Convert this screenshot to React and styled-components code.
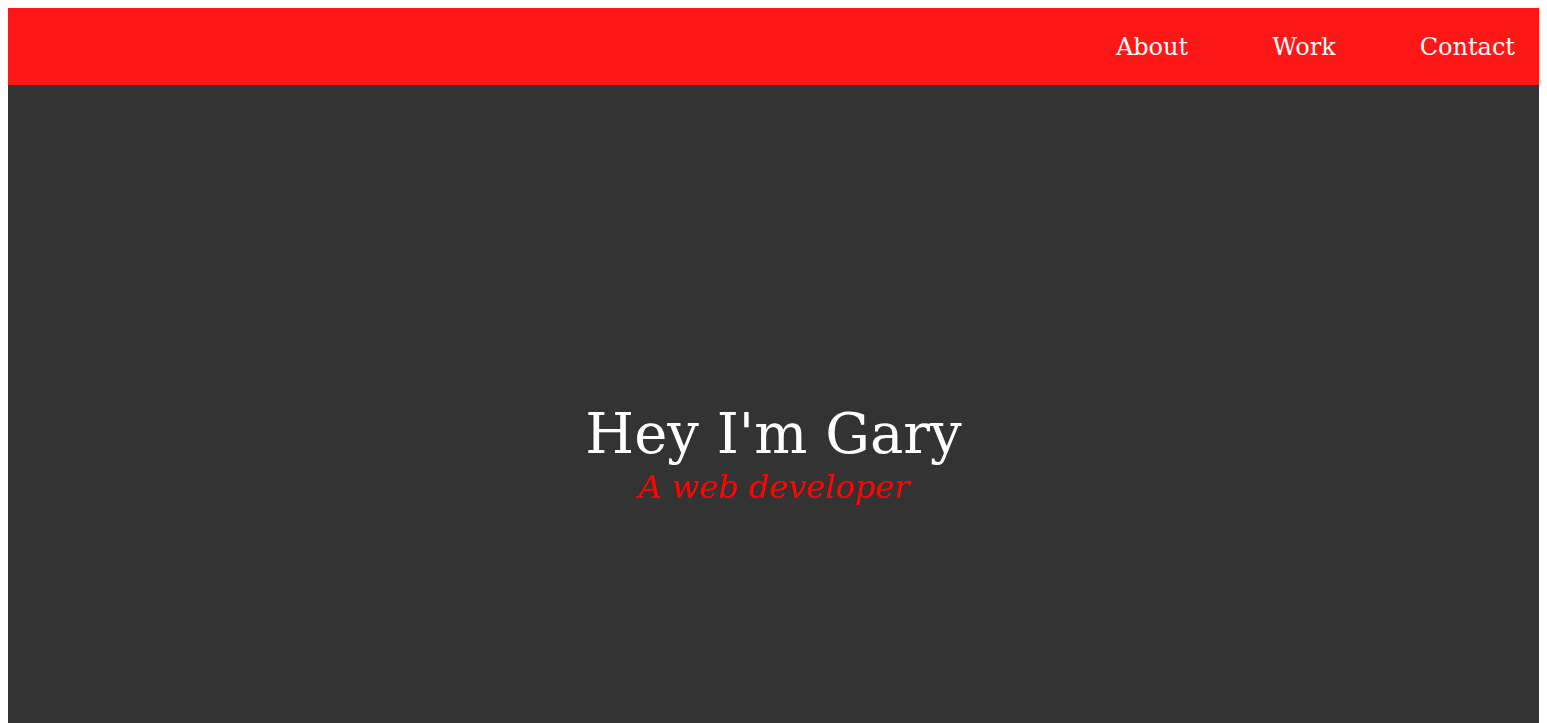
import React from 'react';
import styled, {createGlobalStyle} from "styled-components";

const GlobalStyle = createGlobalStyle`
  body {
    margin: 8px;
    font-family: "DejaVu Serif", serif;
  }
`

const Header = styled.header`
  height: 77px;
  background: #ff1717;
  display: flex;
  align-items: center;
  justify-content: flex-end;
  padding: 0 24px;
`

const Nav = styled.nav`
  display: flex;
  gap: 84px;
`

const NavLink = styled.a`
  color: #ffffff;
  font-size: 24px;
  text-decoration: none;
`

const Hero = styled.section`
  height: 100vh;
  padding-top: 8px;
  background: #333333;
  display: flex;
  flex-direction: column;
  align-items: center;
  justify-content: center;
  text-align: center;
`

const HeroTitle = styled.h1`
  margin: 0;
  color: #ffffff;
  font-size: 56px;
  font-weight: 400;
  line-height: 1.1;
`

const HeroSubtitle = styled.p`
  margin: 3px 0 0;
  color: #ff0000;
  font-size: 32px;
  font-style: italic;
`

function App() {
  return (
    <>
      <GlobalStyle/>
      <Header>
        <Nav>
          <NavLink href="#about">About</NavLink>
          <NavLink href="#work">Work</NavLink>
          <NavLink href="#contact">Contact</NavLink>
        </Nav>
      </Header>
      <Hero>
        <HeroTitle>Hey I'm Gary</HeroTitle>
        <HeroSubtitle>A web developer</HeroSubtitle>
      </Hero>
    </>
  );
}

export default App;
